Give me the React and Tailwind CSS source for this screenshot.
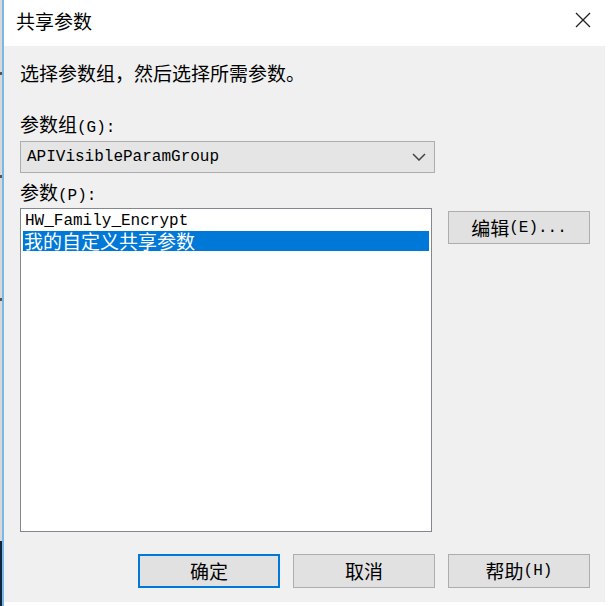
import React from "react";

const CJK = "font-['Noto_Sans_CJK_SC',sans-serif] text-[19px]";
const MONO = "font-['Liberation_Mono','Noto_Sans_CJK_SC',monospace] text-[16px]";

function Btn({ children, primary }) {
  return (
    <div
      className={
        primary
          ? "w-[142px] h-[34px] bg-[#e1e1e1] border-2 border-[#0078d7] flex items-center justify-center leading-[20px] text-black"
          : "w-[142px] h-[34px] bg-[#e1e1e1] border border-[#adadad] flex items-center justify-center leading-[20px] text-black"
      }
    >
      {children}
    </div>
  );
}

export default function App() {
  return (
    <div className="w-[608px] h-[606px] flex bg-white overflow-hidden text-black">
      <div className="w-[2px] flex flex-col bg-[#d8d8d8]">
        <div className="h-[72px]" />
        <div className="h-[3px] bg-[#555]" />
        <div className="h-[100px]" />
        <div className="h-[3px] bg-[#555]" />
        <div className="h-[120px]" />
        <div className="h-[3px] bg-[#555]" />
        <div className="h-[240px]" />
        <div className="flex-1 bg-[#10243c]" />
      </div>
      <div className="w-[2px] bg-[#7fb6ea]" />
      <div className="flex-1 flex flex-col">
        <div className="h-[46px] flex items-start justify-between pl-[12px] pr-[17px] pt-[11px]">
          <div className={CJK + " leading-[20px]"}>共享参数</div>
          <svg width="16" height="16" viewBox="0 0 16 16" className="mt-[1px]">
            <path d="M1 1 L15 15 M15 1 L1 15" stroke="#222" strokeWidth="1.3" fill="none" />
          </svg>
        </div>
        <div className="flex-1 bg-[#f0f0f0] mr-[3px] mb-[4px] pl-[16px] pr-[15px] flex flex-col">
          <div className={CJK + " mt-[17px] leading-[20px] h-[20px]"}>选择参数组，然后选择所需参数。</div>
          <div className="mt-[31px] leading-[20px] h-[20px] whitespace-nowrap">
            <span className={CJK}>参数组</span>
            <span className={MONO}>(G):</span>
          </div>
          <div className="mt-[7px] w-[415px] h-[32px] bg-[#e5e5e5] border border-[#adadad] flex items-center justify-between pl-[6px] pr-[8px]">
            <span className={MONO + " leading-[20px]"}>APIVisibleParamGroup</span>
            <svg width="14" height="8" viewBox="0 0 14 8">
              <path d="M1 1 L7 7 L13 1" stroke="#444" strokeWidth="1.5" fill="none" />
            </svg>
          </div>
          <div className="mt-[9px] leading-[20px] h-[20px] whitespace-nowrap">
            <span className={CJK}>参数</span>
            <span className={MONO}>(P):</span>
          </div>
          <div className="mt-[6px] flex items-start">
            <div className="w-[412px] h-[324px] bg-white border border-[#828790] p-[2px] flex flex-col">
              <div className={MONO + " h-[20px] leading-[20px] pl-[2px]"}>HW_Family_Encrypt</div>
              <div className={CJK + " h-[20px] leading-[20px] pl-[1px] bg-[#0078d7] text-white"}>我的自定义共享参数</div>
            </div>
            <div className="ml-[16px] mt-[3px] w-[142px] h-[33px] bg-[#e1e1e1] border border-[#adadad] flex items-center justify-center leading-[20px] whitespace-nowrap">
              <span className={CJK}>编辑</span>
              <span className={MONO}>(E)...</span>
            </div>
          </div>
          <div className="mt-[22px] flex justify-end gap-[13px]">
            <Btn primary>
              <span className={CJK}>确定</span>
            </Btn>
            <Btn>
              <span className={CJK}>取消</span>
            </Btn>
            <Btn>
              <span className={CJK}>帮助</span>
              <span className={MONO}>(H)</span>
            </Btn>
          </div>
        </div>
      </div>
    </div>
  );
}
